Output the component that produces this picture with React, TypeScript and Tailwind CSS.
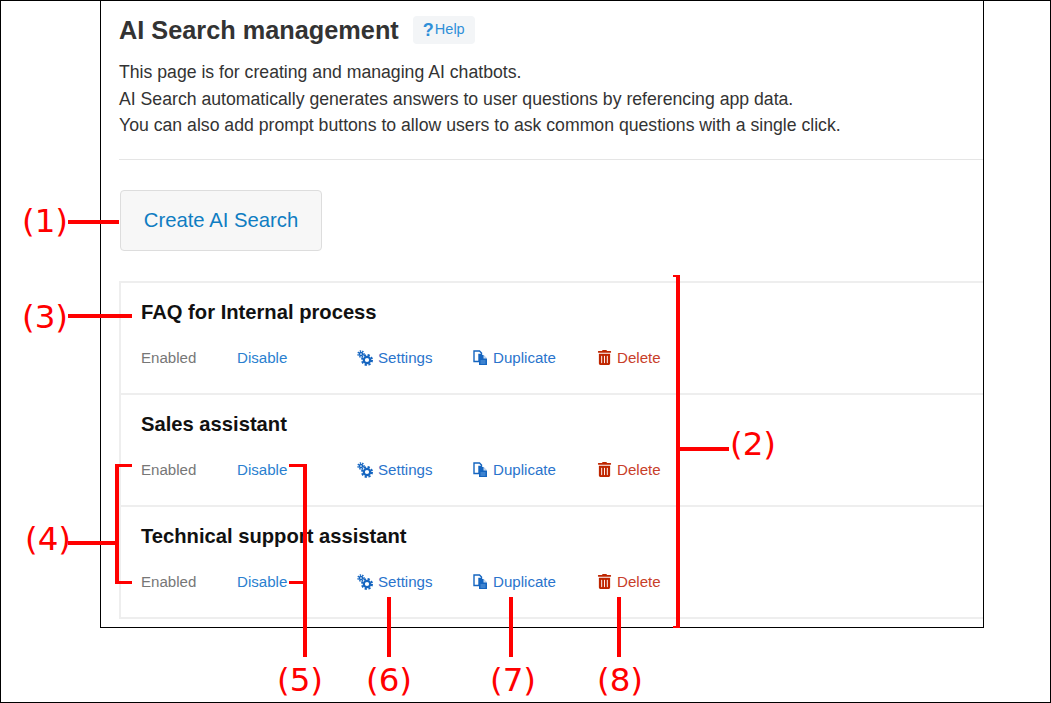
import { FaTrashAlt } from "react-icons/fa";

function GearsIcon() {
  return (
    <svg width="16" height="16" viewBox="0 0 16 16" className="shrink-0 text-[#1565c0]" fill="none" stroke="currentColor">
      <circle cx="10" cy="10" r="3.2" strokeWidth="2.2" />
      <circle cx="10" cy="10" r="5" strokeWidth="2" strokeDasharray="2.2 1.73" />
      <circle cx="4" cy="4" r="1.6" strokeWidth="1.5" />
      <circle cx="4" cy="4" r="3" strokeWidth="1.5" strokeDasharray="1.4 1.1" />
    </svg>
  );
}

function CopyIcon() {
  return (
    <svg width="15" height="16" viewBox="0 0 15 16" className="shrink-0 text-[#1565c0]">
      <path d="M1 1h5.5l2 2v1.5H6v7H1z" fill="none" stroke="currentColor" strokeWidth="1.4" />
      <path d="M6 5h4.5L14 8.5V15H6z" fill="currentColor" />
      <path d="M10.5 5v3.5H14z" fill="#fff" opacity="0.75" />
      <path d="M7.5 11h5M7.5 13h5" stroke="#7fb0e6" strokeWidth="0.8" />
    </svg>
  );
}

function Row({ title, last }: { title: string; last?: boolean }) {
  return (
    <div className={last ? "h-[110px] pl-[20px] pt-[16px]" : "h-[112px] pl-[20px] pt-[16px] border-b-2 border-[#eeeeee]"}>
      <div className="text-[20.2px] leading-[26px] font-bold text-[#111111]">{title}</div>
      <div className="flex items-center mt-[23px] text-[15.1px] leading-[20px]">
        <span className="w-[96px] text-[#777777]">Enabled</span>
        <span className="w-[120px] text-[#2a7fcf]">Disable</span>
        <span className="w-[116px] flex items-center gap-[5px] text-[#2a74cc]">
          <GearsIcon />
          Settings
        </span>
        <span className="w-[124px] flex items-center gap-[5px] text-[#2a74cc]">
          <CopyIcon />
          Duplicate
        </span>
        <span className="flex items-center gap-[5px] text-[#c8402a]">
          <FaTrashAlt className="text-[15px] text-[#bf2600]" />
          Delete
        </span>
      </div>
    </div>
  );
}

const lines: [number, number, number, number][] = [
  [68, 220, 51, 4],
  [68, 314, 64, 4],
  [115, 464, 4, 120],
  [115, 464, 17, 3],
  [115, 581, 17, 3],
  [68, 541, 47, 4],
  [289, 464, 15, 3],
  [289, 581, 15, 3],
  [303, 464, 4, 193],
  [387, 597, 4, 60],
  [509, 597, 4, 60],
  [617, 597, 4, 60],
  [676, 275, 4, 353],
  [673, 275, 4, 2],
  [673, 626, 4, 2],
  [680, 447, 49, 4],
];

const labels: [string, number, number][] = [
  ["(1)", 22, 232],
  ["(2)", 730, 455],
  ["(3)", 22, 328],
  ["(4)", 25, 550],
  ["(5)", 277, 691],
  ["(6)", 366, 691],
  ["(7)", 490, 691],
  ["(8)", 597, 691],
];

export default function App() {
  return (
    <div className="relative w-[1051px] h-[703px] bg-white border border-black font-['Liberation_Sans',Arial,sans-serif] overflow-hidden">
      <div className="ml-[99px] w-[884px] h-[627px] border-x border-b border-black overflow-hidden pl-[18px]">
        <div className="flex items-center h-[28px] mt-[15px]">
          <h1 className="text-[25.3px] font-bold text-[#333333] leading-[28px]">AI Search management</h1>
          <span className="ml-[14px] h-[28px] w-[62px] rounded-[4px] bg-[#f3f5f7] flex items-center justify-center text-[14.5px] text-[#2e8fd8]">
            <span className="mr-[1px] text-[18px] leading-[18px] font-bold">?</span>Help
          </span>
        </div>
        <div className="mt-[15px] text-[#333333] text-[17.66px] leading-[26.5px]">
          <p>This page is for creating and managing AI chatbots.</p>
          <p>AI Search automatically generates answers to user questions by referencing app data.</p>
          <p>You can also add prompt buttons to allow users to ask common questions with a single click.</p>
        </div>
        <div className="mt-[20px] border-t border-[#e5e5e5]" />
        <button className="mt-[30px] ml-[1px] block w-[202px] h-[61px] rounded-[4px] border border-[#dddddd] bg-[#f7f7f7] text-[20.3px] text-[#0f7dc2]">
          Create AI Search
        </button>
        <div className="mt-[30px] w-[900px] border-2 border-[#eeeeee]">
          <Row title="FAQ for Internal process" />
          <Row title="Sales assistant" />
          <Row title="Technical support assistant" last />
        </div>
      </div>

      {/* Annotation overlay: callout lines and numbers drawn over the screenshot */}
      <svg width="1051" height="703" className="absolute left-[-1px] top-[-1px] pointer-events-none">
        {lines.map(([x, y, w, h], i) => (
          <rect key={i} x={x} y={y} width={w} height={h} fill="#ff0000" />
        ))}
        {labels.map(([t, x, y]) => (
          <text key={t} x={x} y={y} fontSize="32.5" fill="#ff0000" fontFamily="'DejaVu Sans', sans-serif">
            {t}
          </text>
        ))}
      </svg>
    </div>
  );
}
